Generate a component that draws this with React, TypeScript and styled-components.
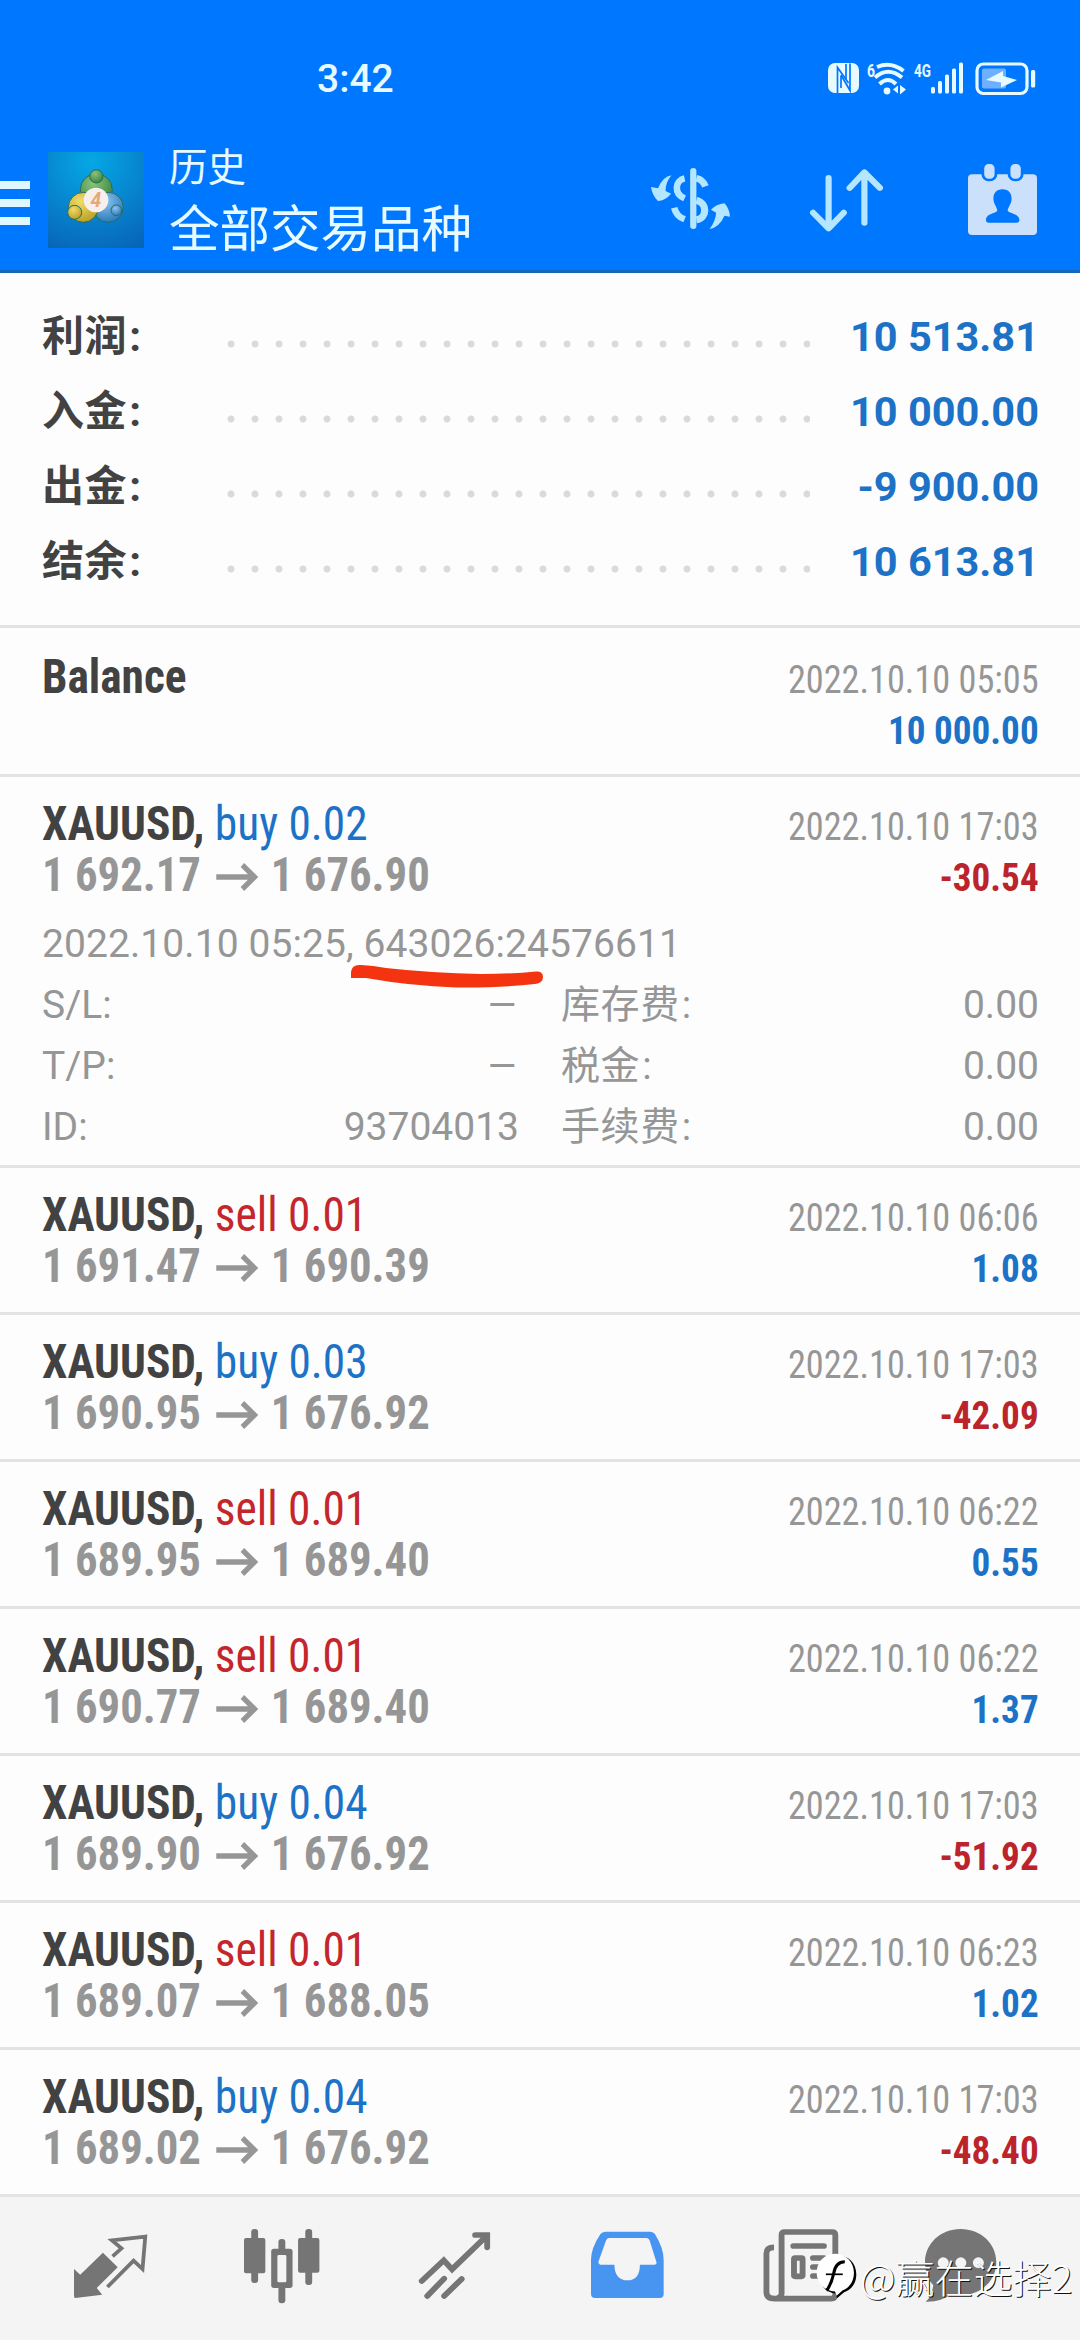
import React from "react";
import styled, { createGlobalStyle, css } from "styled-components";

const Global = createGlobalStyle`
  * { box-sizing: border-box; }
  html, body { margin: 0; padding: 0; }
  body { background: #fdfdfd; font-family: Roboto, "Noto Sans CJK SC", sans-serif; }
  svg { display: block; flex: none; overflow: visible; }
`;

const Screen = styled.div`
  width: 1080px;
  height: 2340px;
  position: relative;
  overflow: hidden;
  display: flex;
  flex-direction: column;
  background: #fdfdfd;
`;

const TopArea = styled.header`
  height: 273px;
  flex: none;
  background: #0077ff;
  border-bottom: 3px solid #1568b8;
  color: #e6faff;
`;

const StatusBar = styled.div`
  height: 130px;
  display: flex;
  align-items: flex-start;
  padding: 54px 44px 0 317px;
`;

const Clock = styled.div`
  font-size: 39px;
  font-weight: 500;
  line-height: 50px;
  flex: 1;
`;

const StatusIcons = styled.div`
  display: flex;
  align-items: flex-start;
  padding-top: 8px;
`;

const AppBar = styled.div`
  height: 140px;
  display: flex;
  align-items: flex-start;
`;

const MenuButton = styled.div`
  width: 30px;
  margin: 51px 18px 0 0;
  display: grid;
  gap: 10px;
`;

const MenuBar = styled.span`
  height: 8px;
  background: #dff8ff;
`;

const Logo = styled.div`
  width: 97px;
  height: 97px;
  margin: 22px 24px 0 0;
`;

const Titles = styled.div`
  flex: 1;
  padding-top: 15px;
`;

const Subtitle = styled.div`
  font-size: 38.5px;
  line-height: 46px;
`;

const Title = styled.div`
  font-size: 50.5px;
  line-height: 60px;
  margin-top: 9px;
`;

const Actions = styled.div`
  display: flex;
  align-items: flex-start;
  padding: 34px 43px 0 0;
`;

const Summary = styled.section`
  height: 355px;
  flex: none;
  padding: 26px 41px 0 42px;
  border-bottom: 3px solid #e3e3e3;
`;

const SummaryRow = styled.div`
  height: 75px;
  display: flex;
  align-items: center;
  font-size: 41.5px;
  font-weight: 700;
  color: #424242;
`;

const SummaryLabel = styled.span`
  width: 185px;
  font-size: 42px;
  line-height: 50px;
  letter-spacing: 0.6px;
  margin-top: 1px;
`;

const Colon = styled.span`
  margin-left: 2px;
`;

const Dots = styled.span`
  width: 583px;
  height: 8px;
  margin-top: 15px;
  background: radial-gradient(circle at 4px 4px, #dadada 3px, transparent 4px) 0 0 / 24px 8px repeat-x;
`;

const SummaryValue = styled.span`
  flex: 1;
  text-align: right;
  color: #1c72c6;
`;

const condensed = css`
  font-family: "Roboto Condensed", Roboto, "Noto Sans CJK SC", sans-serif;
  font-stretch: 75%;
`;

const Deal = styled.article<{ $height: number; $top?: number }>`
  height: ${(p) => p.$height}px;
  flex: none;
  padding: ${(p) => p.$top ?? 21}px 41px 0 42px;
  border-bottom: 3px solid #e3e3e3;
`;

const DealHead = styled.div`
  display: flex;
  justify-content: space-between;
  ${condensed}
`;

const Column = styled.div<{ $right?: boolean }>`
  text-align: ${(p) => (p.$right ? "right" : "left")};
`;

const Symbol = styled.div`
  font-size: 48px;
  line-height: 52px;
  font-weight: 700;
  color: #424242;
  white-space: pre;
  transform: scaleX(0.945);
  transform-origin: left;
`;

const Side = styled.span<{ $sell?: boolean }>`
  font-weight: 400;
  color: ${(p) => (p.$sell ? "#c4262c" : "#1c72c6")};
`;

const Prices = styled.div`
  display: flex;
  align-items: center;
  font-size: 48px;
  line-height: 50px;
  font-weight: 700;
  color: #969696;
  transform: scaleX(0.932);
  transform-origin: left;
`;

const Time = styled.div`
  font-size: 39px;
  line-height: 52px;
  padding-top: 3px;
  color: #969696;
  transform: scaleX(0.93);
  transform-origin: right;
`;

const Amount = styled.div<{ $loss?: boolean }>`
  font-size: 39px;
  line-height: 51px;
  font-weight: 700;
  color: ${(p) => (p.$loss ? "#bc242c" : "#1c72c6")};
  transform: scaleX(0.952);
  transform-origin: right;
`;

const Details = styled.div`
  font-size: 39px;
  line-height: 61px;
  color: #969696;
  padding-top: 10px;
`;

const Comment = styled.div`
  letter-spacing: 0.08px;
`;

const DetailGrid = styled.div`
  display: grid;
  grid-template-columns: 477px 478px;
  column-gap: 42px;
`;

const DetailCell = styled.div`
  display: flex;
  justify-content: space-between;
  height: 61px;
`;

const CjkLabel = styled.span`
  letter-spacing: 0.6px;
`;

const DetailValue = styled.span<{ $dash?: boolean }>`
  transform: scaleX(${(p) => (p.$dash ? 1.25 : 1)});
  transform-origin: right;
`;

const Scribble = styled.svg`
  position: absolute;
  left: 341px;
  top: 960px;
`;

const NavBar = styled.nav`
  flex: 1;
  display: grid;
  grid-template-columns: 172px 172px 173px 173px 174px 146px;
  padding: 32px 0 0 24px;
  justify-items: center;
  align-items: start;
  background: #f4f4f4;
`;

const Watermark = styled.div`
  position: absolute;
  left: 817px;
  top: 2249px;
  display: flex;
  align-items: center;
  gap: 4px;
  font-size: 39px;
  line-height: 54px;
  font-family: "Noto Sans CJK SC", sans-serif;
  font-weight: 300;
  color: #fff;
  white-space: nowrap;
  text-shadow: 1px 1px 0 #111;
`;

const ArrowSvg = styled.svg`
  margin: 3px 14px 0 16px;
`;

const Arrow = () => (
  <ArrowSvg width="45" height="28" viewBox="0 0 45 28" fill="none" stroke="#969696" strokeWidth="5.5">
    <path d="M0 14H41M28 2L41 14L28 26" />
  </ArrowSvg>
);

interface DealData {
  side: "buy" | "sell";
  lots: string;
  open: string;
  close: string;
  time: string;
  amount: string;
}

const deals: DealData[] = [
  { side: "buy", lots: "0.02", open: "1 692.17", close: "1 676.90", time: "2022.10.10 17:03", amount: "-30.54" },
  { side: "sell", lots: "0.01", open: "1 691.47", close: "1 690.39", time: "2022.10.10 06:06", amount: "1.08" },
  { side: "buy", lots: "0.03", open: "1 690.95", close: "1 676.92", time: "2022.10.10 17:03", amount: "-42.09" },
  { side: "sell", lots: "0.01", open: "1 689.95", close: "1 689.40", time: "2022.10.10 06:22", amount: "0.55" },
  { side: "sell", lots: "0.01", open: "1 690.77", close: "1 689.40", time: "2022.10.10 06:22", amount: "1.37" },
  { side: "buy", lots: "0.04", open: "1 689.90", close: "1 676.92", time: "2022.10.10 17:03", amount: "-51.92" },
  { side: "sell", lots: "0.01", open: "1 689.07", close: "1 688.05", time: "2022.10.10 06:23", amount: "1.02" },
  { side: "buy", lots: "0.04", open: "1 689.02", close: "1 676.92", time: "2022.10.10 17:03", amount: "-48.40" },
];

const summary = [
  ["利润", "10 513.81"],
  ["入金", "10 000.00"],
  ["出金", "-9 900.00"],
  ["结余", "10 613.81"],
];

const details = [
  ["S/L:", "–", "库存费", "0.00"],
  ["T/P:", "–", "税金", "0.00"],
  ["ID:", "93704013", "手续费", "0.00"],
];

const StatusGlyphs = () => (
  <svg width="208" height="34" viewBox="827 62 208 34" fill="#e6faff">
    <rect x="827" y="63" width="31" height="30" rx="7" />
    <g stroke="#0077ff" strokeWidth="1.7" fill="none">
      <path d="M836.5 93V67.500L847.500 83" />
      <path d="M840 75L849 90.500V63.500" />
      <path d="M845 64V79" />
      <path d="M840 76V88" />
    </g>
    <text x="866" y="76.500" fontSize="18" fontWeight="700" fontFamily="Roboto" textLength="8" lengthAdjust="spacingAndGlyphs">6</text>
    <g fill="none" stroke="#e6faff" strokeWidth="4">
      <path d="M876 67Q890 61 902.500 71" />
      <path d="M874 77.500Q887 66 901 77.500" />
      <path d="M878.500 84Q887 76 895 84" />
    </g>
    <circle cx="886" cy="91" r="3.400" />
    <path d="M892 89.500l5-4v8zM899 85l6 4.500-6 5z" />
    <text x="913" y="76.500" fontSize="18.500" fontWeight="700" fontFamily="Roboto" textLength="17" lengthAdjust="spacingAndGlyphs">4G</text>
    <rect x="930" y="87" width="4" height="6.500" rx="1.500" />
    <rect x="937" y="81" width="4" height="12.500" rx="1.500" />
    <rect x="944" y="74.500" width="4" height="19" rx="1.500" />
    <rect x="951" y="68.500" width="4" height="25" rx="1.500" />
    <rect x="958" y="62.500" width="4" height="31" rx="1.500" />
    <rect x="976" y="64" width="50" height="29.500" rx="6.500" fill="none" stroke="#e6faff" strokeWidth="3.200" />
    <rect x="981" y="68.500" width="24" height="20" rx="2" fill="#6eb0ff" />
    <path d="M985 80L1002 71V76L1016 80L1000 87.500V82.500Z" />
    <rect x="1030" y="70" width="4.200" height="17.500" rx="1.500" />
  </svg>
);

const LogoArt = () => (
  <svg width="96" height="96" viewBox="144 39 288 288">
    <defs>
      <radialGradient id="bg" cx="0.45" cy="0.1" r="1">
        <stop offset="0" stopColor="#05a8e6" />
        <stop offset="0.5" stopColor="#0786cf" />
        <stop offset="1" stopColor="#0765b8" />
      </radialGradient>
      <radialGradient id="g" cx="0.4" cy="0.3" r="0.8"><stop offset="0" stopColor="#8cc27c" /><stop offset="1" stopColor="#2e7f3a" /></radialGradient>
      <radialGradient id="y" cx="0.4" cy="0.3" r="0.8"><stop offset="0" stopColor="#f0dc68" /><stop offset="1" stopColor="#b39a1e" /></radialGradient>
      <radialGradient id="b" cx="0.4" cy="0.3" r="0.8"><stop offset="0" stopColor="#8cc4ee" /><stop offset="1" stopColor="#2071b6" /></radialGradient>
    </defs>
    <rect x="144" y="39" width="288" height="288" fill="url(#bg)" />
    <g stroke="#2c6b58" strokeWidth="3">
      <circle cx="289" cy="152" r="48" fill="url(#g)" />
      <circle cx="325" cy="205" r="45" fill="url(#b)" />
      <circle cx="250" cy="205" r="45" fill="url(#y)" />
      <circle cx="289" cy="112" r="20" fill="url(#g)" />
      <circle cx="224" cy="220" r="21" fill="url(#y)" />
      <circle cx="349" cy="214" r="16" fill="url(#b)" />
    </g>
    <circle cx="288" cy="183" r="37" fill="#f7efe9" />
    <text x="288" y="204" fontSize="58" fontStyle="italic" fontWeight="700" fontFamily="Roboto" textAnchor="middle" fill="#e5a878">4</text>
  </svg>
);

const DollarSvg = styled.svg`
  margin: 4px 80px 0 0;
`;

const DollarIcon = () => (
  <DollarSvg width="79" height="61" viewBox="322 415 228 183" preserveAspectRatio="none" fill="#b5e6ff">
    <rect x="435" y="415" width="18" height="183" rx="9" />
    <path d="M381 437Q357 440 342 476L322 472Q326 498 342 514Q364 512 380 492L364 484Q364 458 381 437Z" />
    <path d="M491 598Q520 592 534 558L550 561Q548 536 534 521Q510 524 495 540L510 549Q508 576 491 598Z" />
    <g fill="none" stroke="#b5e6ff" strokeWidth="19">
      <path d="M419 446C391 452 387 492 419 506" />
      <path d="M389 534Q395 560 419 569" />
      <path d="M453 446Q472 450 479 470" strokeWidth="20" />
      <path d="M453 512C486 520 484 566 453 570" strokeWidth="21" />
    </g>
  </DollarSvg>
);

const SortSvg = styled.svg`
  margin: 5px 85px 0 0;
`;

const SortIcon = () => (
  <SortSvg width="73" height="63" viewBox="783 417 212 190" preserveAspectRatio="none" fill="none" stroke="#b5e6ff" strokeWidth="18" strokeLinecap="round" strokeLinejoin="round">
    <path d="M837 444V594M792 549L837 596L881 549M941 579V430M898 474L941 427L986 474" />
  </SortSvg>
);

const CalendarIcon = () => (
  <svg width="69" height="71" viewBox="1242 403 200 213" preserveAspectRatio="none" fill="#cbe1fb">
    <rect x="1242" y="434" width="200" height="182" rx="12" />
    <g stroke="#0077ff" strokeWidth="8">
      <rect x="1285" y="399" width="38" height="52" rx="17" />
      <rect x="1361" y="399" width="38" height="52" rx="17" />
    </g>
    <path fill="#0077ff" d="M1342 479C1362 479 1370 494 1368 511C1367 524 1359 530 1357 542C1357 552 1391 550 1391 572Q1391 579 1384 579H1301Q1294 579 1294 572C1294 550 1327 552 1327 542C1325 530 1317 524 1316 511C1314 494 1322 479 1342 479Z" />
  </svg>
);

const NavIcon = ({ x, w, children }: { x: number; w: number; children: React.ReactNode }) => (
  <svg width={w / 2.9037} height={223 / 3} viewBox={`${x} 147 ${w} 223`} preserveAspectRatio="none" fill="#757575">
    {children}
  </svg>
);

const App = () => (
  <Screen>
    <Global />
    <TopArea>
      <StatusBar>
        <Clock>3:42</Clock>
        <StatusIcons><StatusGlyphs /></StatusIcons>
      </StatusBar>
      <AppBar>
        <MenuButton><MenuBar /><MenuBar /><MenuBar /></MenuButton>
        <Logo><LogoArt /></Logo>
        <Titles>
          <Subtitle>历史</Subtitle>
          <Title>全部交易品种</Title>
        </Titles>
        <Actions>
          <DollarIcon />
          <SortIcon />
          <CalendarIcon />
        </Actions>
      </AppBar>
    </TopArea>

    <Summary>
      {summary.map(([label, value]) => (
        <SummaryRow key={label}>
          <SummaryLabel>{label}<Colon>:</Colon></SummaryLabel>
          <Dots />
          <SummaryValue>{value}</SummaryValue>
        </SummaryRow>
      ))}
    </Summary>

    <Deal $height={149} $top={23}>
      <DealHead>
        <Column><Symbol>Balance</Symbol></Column>
        <Column $right>
          <Time>2022.10.10 05:05</Time>
          <Amount>10 000.00</Amount>
        </Column>
      </DealHead>
    </Deal>

    {deals.map((d, i) => (
      <Deal key={i} $height={i === 0 ? 391 : 147}>
        <DealHead>
          <Column>
            <Symbol>XAUUSD, <Side $sell={d.side === "sell"}>{d.side} {d.lots}</Side></Symbol>
            <Prices>{d.open}<Arrow />{d.close}</Prices>
          </Column>
          <Column $right>
            <Time>{d.time}</Time>
            <Amount $loss={d.amount.startsWith("-")}>{d.amount}</Amount>
          </Column>
        </DealHead>
        {i === 0 && (
          <Details>
            <Comment>2022.10.10 05:25, 643026:24576611</Comment>
            <DetailGrid>
              {details.map(([a, av, b, bv]) => (
                <React.Fragment key={a}>
                  <DetailCell><span>{a}</span><DetailValue $dash={av === "–"}>{av}</DetailValue></DetailCell>
                  <DetailCell><CjkLabel>{b}<Colon>:</Colon></CjkLabel><DetailValue>{bv}</DetailValue></DetailCell>
                </React.Fragment>
              ))}
            </DetailGrid>
          </Details>
        )}
      </Deal>
    ))}

    <NavBar>
      <NavIcon x={214} w={212}>
        <path d="M214 267L232 284L298 218L341 262L280 324L296 344L218 354Q214 354 214 348Z" />
        <path d="M326 229L352 205L324 181L421 170L413 267L387 242L311 321" fill="none" stroke="#757575" strokeWidth="11" />
      </NavIcon>
      <NavIcon x={708} w={220}>
        <rect x="729" y="147" width="20" height="162" rx="9" />
        <rect x="708" y="174" width="62" height="106" rx="6" />
        <rect x="886" y="147" width="20" height="168" rx="9" />
        <rect x="865" y="174" width="62" height="104" rx="6" />
        <rect x="808" y="177" width="20" height="193" rx="9" />
        <rect x="787" y="206" width="62" height="118" rx="8" />
        <rect x="805" y="225" width="26" height="82" rx="4" fill="#f4f4f4" />
      </NavIcon>
      <NavIcon x={1213} w={207}>
        <path d="M1221 303L1285 241L1309 268L1410 167M1376 165H1411V202M1237 348L1286 296M1286 348L1337 297" fill="none" stroke="#757575" strokeWidth="17" strokeLinecap="round" />
      </NavIcon>
      <NavIcon x={145} w={211}>
        <path fillRule="evenodd" fill="#4795f0" d="M186 155H318Q326 155 331 163Q356 205 356 240V342Q356 354 344 354H157Q145 354 145 342V240Q145 205 172 163Q178 155 186 155ZM198 174Q192 174 189 181L167 244Q165 254 173 254H213C213 283 226 301 251 301S287 283 287 254H329Q337 254 335 246L315 181Q312 174 306 174Z" />
      </NavIcon>
      <NavIcon x={645} w={218}>
        <g fill="none" stroke="#757575" strokeWidth="17">
          <path d="M677 202Q655 202 655 220V336Q655 356 680 356H843Q855 356 855 343V165Q855 156 846 156H708Q699 156 699 165V340Q699 355 684 355" />
          <path d="M733 198H822M790 234H822M790 261H822M790 288H822" strokeLinecap="round" />
          <rect x="735" y="234" width="25" height="55" rx="3" />
        </g>
      </NavIcon>
      <NavIcon x={1110} w={207}>
        <path d="M1213 147C1272 147 1317 190 1317 247S1270 346 1213 346Q1200 346 1186 343Q1158 366 1112 365Q1130 350 1134 316Q1110 290 1110 247C1110 190 1156 147 1213 147Z" />
        <g fill="#f4f4f4"><circle cx="1163" cy="248" r="16" /><circle cx="1214" cy="248" r="16" /><circle cx="1265" cy="248" r="16" /></g>
      </NavIcon>
    </NavBar>

    <Scribble width="210" height="36" viewBox="340 960 210 36" fill="#f43410">
      <path d="M350 972Q351 964 360 965Q372 965.500 385 968Q430 973 480 974Q510 974 535 971.500Q542 971 542 977Q542 983 534 984Q500 988 455 987.500Q410 986 365 978L350 978Z" />
    </Scribble>

    <Watermark>
      <svg width="39" height="44" viewBox="230 135 115 130">
        <path d="M290 139C322 139 346 162 346 195S326 242 310 248L289 266L286 252C256 249 236 226 236 195S258 139 290 139Z" fill="#000" />
        <path d="M283 134C315 134 339 158 339 190S320 238 305 243L288 258L283 246C252 244 229 221 229 190S251 134 283 134Z" fill="#fff" />
        <path d="M258 243Q272 225 279 193Q285 158 312 158" fill="none" stroke="#000" strokeWidth="9" />
        <path d="M256 195H306" fill="none" stroke="#000" strokeWidth="5" />
      </svg>
      <span>@赢在选择2</span>
    </Watermark>
  </Screen>
);

export default App;
